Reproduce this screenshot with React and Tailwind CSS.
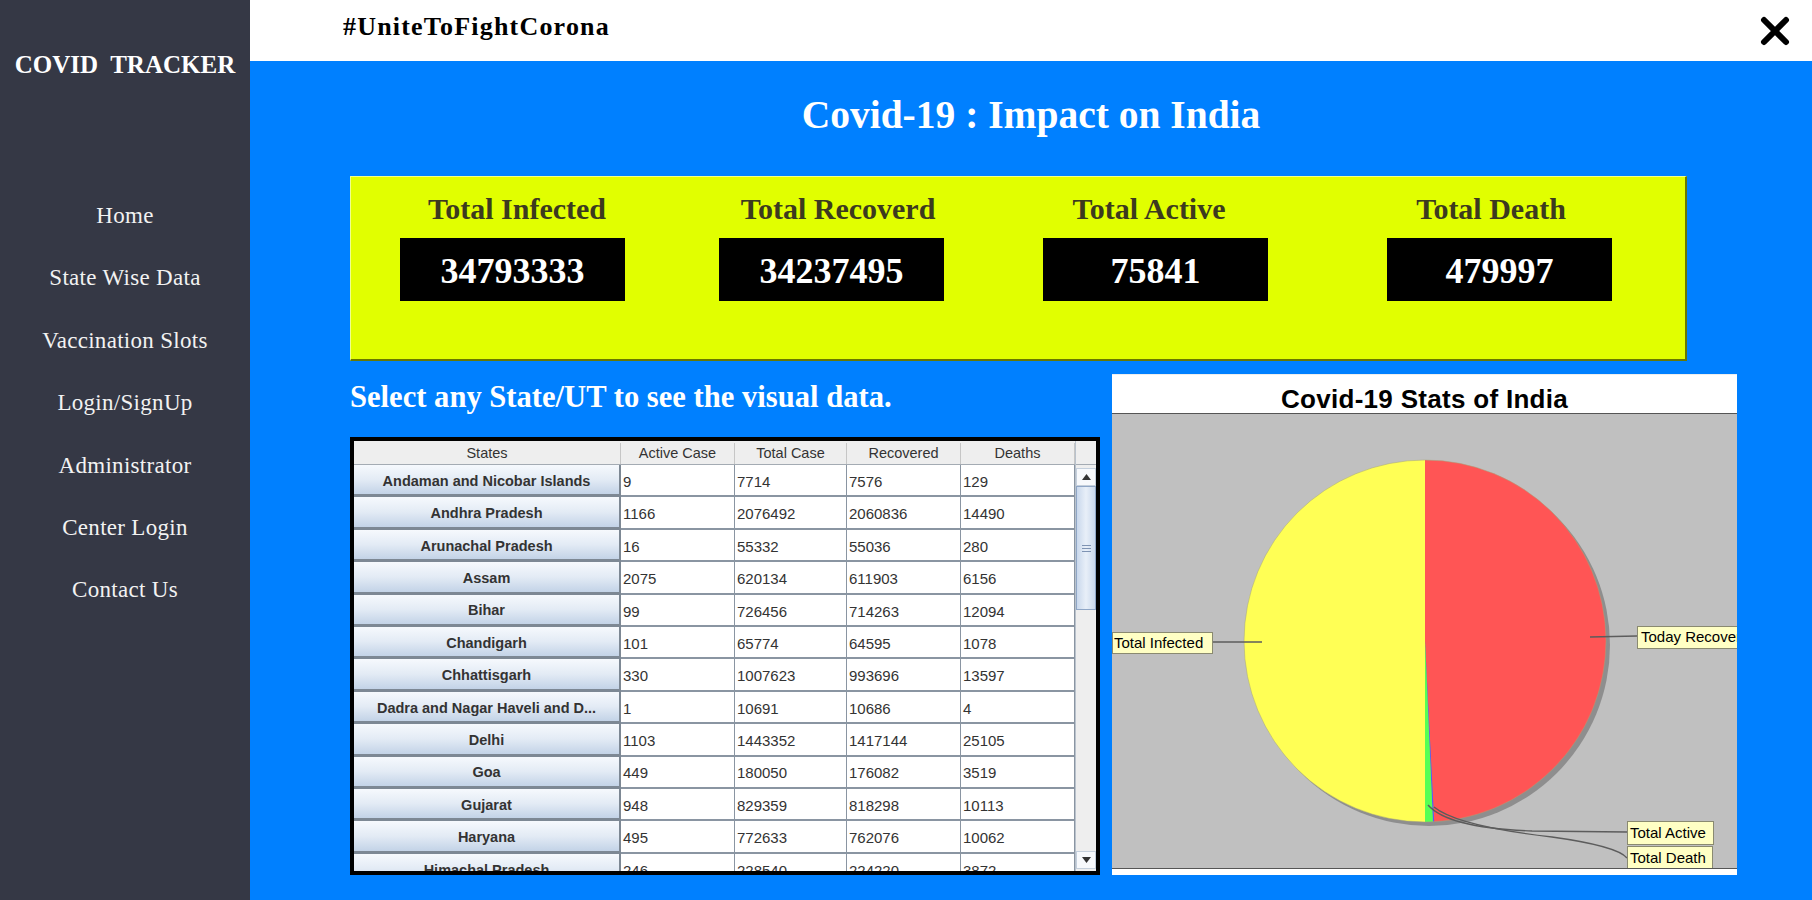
import React from 'react';

const navItems = [
  'Home',
  'State Wise Data',
  'Vaccination Slots',
  'Login/SignUp',
  'Administrator',
  'Center Login',
  'Contact Us',
];

const stats = [
  { label: 'Total Infected', value: '34793333', col: '', lab: 'pl-[9px]' },
  { label: 'Total Recoverd', value: '34237495', col: 'ml-[94px]', lab: 'pl-[13px]' },
  { label: 'Total Active', value: '75841', col: 'ml-[99px]', lab: 'pr-[13px]' },
  { label: 'Total Death', value: '479997', col: 'ml-[119px]', lab: 'pr-[17px]' },
];

const rows = [
  ['Andaman and Nicobar Islands', '9', '7714', '7576', '129'],
  ['Andhra Pradesh', '1166', '2076492', '2060836', '14490'],
  ['Arunachal Pradesh', '16', '55332', '55036', '280'],
  ['Assam', '2075', '620134', '611903', '6156'],
  ['Bihar', '99', '726456', '714263', '12094'],
  ['Chandigarh', '101', '65774', '64595', '1078'],
  ['Chhattisgarh', '330', '1007623', '993696', '13597'],
  ['Dadra and Nagar Haveli and D...', '1', '10691', '10686', '4'],
  ['Delhi', '1103', '1443352', '1417144', '25105'],
  ['Goa', '449', '180050', '176082', '3519'],
  ['Gujarat', '948', '829359', '818298', '10113'],
  ['Haryana', '495', '772633', '762076', '10062'],
  ['Himachal Pradesh', '246', '228540', '224220', '3872'],
];

// widths of the numeric columns
const colW = ['w-[114px]', 'w-[112px]', 'w-[114px]', 'flex-1'];

function StatsTable() {
  return (
    <div className="flex h-[438px] w-[750px] border-4 border-black bg-white font-['Liberation_Sans',Arial,sans-serif] text-[#333]">
      <div className="flex w-[721px] flex-col overflow-hidden">
        {/* header */}
        <div className="flex h-[24px] shrink-0 border-b border-[#a4abb3] bg-[#eeeeee] pt-[2px] text-[14.5px]">
          <div className="flex w-[267px] items-center justify-center border-r border-[#c6c6c6]">States</div>
          {['Active Case', 'Total Case', 'Recovered', 'Deaths'].map((h, i) => (
            <div key={h} className={`${colW[i]} flex items-center justify-center border-r border-[#c6c6c6]`}>
              {h}
            </div>
          ))}
        </div>
        {rows.map((r) => (
          <div key={r[0]} className="flex h-[32.4px] shrink-0">
            <div className="flex w-[267px] items-center justify-center border-r-2 border-b-[3px] border-[#7d8894] bg-gradient-to-b from-[#f6f9fd] via-[#e3ebf5] to-[#c3d3e7] pt-[4px] text-[14.5px] font-bold whitespace-nowrap">
              {r[0]}
            </div>
            {r.slice(1).map((v, i) => (
              <div key={i} className={`${colW[i]} flex items-center border-r border-b-2 border-[#8a95a2] pt-[4px] pl-[2px] text-[15px]`}>
                {v}
              </div>
            ))}
          </div>
        ))}
      </div>

      {/* scrollbar */}
      <div className="flex w-[21px] flex-col border-l border-[#b9c2cc] bg-[#eeeeee]">
        <div className="h-[24px] shrink-0 border-b border-[#a4abb3]" />
        <div className="mt-[3px] flex h-[18px] shrink-0 items-center justify-center border border-[#c4cfdc] bg-[#f7f9fc]">
          <svg width="9" height="6" viewBox="0 0 9 6"><path d="M0 6 4.5 0 9 6Z" fill="#333" /></svg>
        </div>
        <div className="flex h-[124px] shrink-0 items-center justify-center border border-[#8fa6c6] bg-gradient-to-r from-[#c9d8ec] via-[#e8eff8] to-[#c9d8ec]">
          <div className="flex w-[9px] flex-col gap-[2px]">
            <div className="h-[1px] bg-[#7e93b3]" />
            <div className="h-[1px] bg-[#7e93b3]" />
            <div className="h-[1px] bg-[#7e93b3]" />
          </div>
        </div>
        <div className="flex-1" />
        <div className="mb-[2px] flex h-[18px] shrink-0 items-center justify-center border border-[#c4cfdc] bg-[#f7f9fc]">
          <svg width="9" height="6" viewBox="0 0 9 6"><path d="M0 0 4.5 6 9 0Z" fill="#333" /></svg>
        </div>
      </div>
    </div>
  );
}

const tagCls =
  "absolute flex items-center border border-[#8a8a70] bg-[#ffffc4] font-['Liberation_Sans',Arial,sans-serif] text-[15px] whitespace-nowrap text-black";

function PieChart() {
  return (
    <div className="flex h-[501px] w-[625px] flex-col border-t border-[#eeeeee] bg-white">
      <div className="h-[39px] shrink-0 border-b border-[#555] pt-[9px] text-center font-['Liberation_Sans',Arial,sans-serif] text-[26px] leading-[30px] font-bold tracking-[0.3px] text-black">
        Covid-19 Stats of India
      </div>
      <div className="relative h-[455px] shrink-0 overflow-hidden border-b border-[#555] bg-[#c0c0c0]">
        <svg width="625" height="455" viewBox="0 0 625 455" className="block">
          <circle cx="317" cy="231" r="181" fill="#8e8e8e" />
          <path d="M313 227 L313 46 A181 181 0 0 1 322.16 407.77 Z" fill="#ff5555" />
          <path d="M313 227 L322.16 407.77 A181 181 0 0 1 320.9 407.83 Z" fill="#5555ff" />
          <path d="M313 227 L320.9 407.83 A181 181 0 0 1 313 408 Z" fill="#55ff55" />
          <path d="M313 227 L313 408 A181 181 0 0 1 313 46 Z" fill="#ffff55" />
          <circle cx="313" cy="227" r="181" fill="none" stroke="#a5a57a" strokeWidth="0.5" />
          <g fill="none" stroke="#5c5c5c" strokeWidth="1.4">
            <path d="M101 228 L150 228" />
            <path d="M478 223 L525 222" />
            <path d="M316 391 Q 336 414 420 417 L515 418" />
            <path d="M322 393 Q 345 412 440 423 Q 505 432 515 444" />
          </g>
        </svg>
        <div className={`${tagCls} top-[218px] left-0 h-[22px] w-[101px] pl-[1px]`}>Total Infected</div>
        <div className={`${tagCls} top-[212px] left-[525px] h-[23px] w-[120px] pl-[3px]`}>Today Recovered</div>
        <div className={`${tagCls} top-[407px] left-[515px] h-[24px] w-[87px] pl-[2px]`}>Total Active</div>
        <div className={`${tagCls} top-[432px] left-[515px] h-[24px] w-[86px] pl-[2px]`}>Total Death</div>
      </div>
    </div>
  );
}

export default function App() {
  return (
    <div className="flex h-[900px] w-[1812px] overflow-hidden font-['Liberation_Serif','Times_New_Roman',serif]">
      {/* Sidebar */}
      <aside className="flex w-[250px] shrink-0 flex-col bg-[#353845] text-white">
        <div className="pt-[51px] text-center text-[25px] leading-[28px] font-bold whitespace-pre">COVID  TRACKER</div>
        <nav className="mt-[106px] flex flex-col">
          {navItems.map((item) => (
            <div key={item} className="h-[62.4px] text-center text-[23px] leading-[62.4px] tracking-[0.3px] text-[#f2f2f2]">
              {item}
            </div>
          ))}
        </nav>
      </aside>

      {/* Main */}
      <main className="flex flex-1 flex-col">
        <header className="flex h-[61px] shrink-0 items-start justify-between bg-white">
          <div className="pt-[12px] pl-[93px] text-[26px] leading-[30px] font-bold tracking-[1.2px] text-black">
            #UniteToFightCorona
          </div>
          <button className="mt-[16px] mr-[22px]">
            <svg width="30" height="30" viewBox="0 0 30 30">
              <path d="M4 4 26 26 M26 4 4 26" stroke="#000" strokeWidth="6" strokeLinecap="round" />
            </svg>
          </button>
        </header>

        <section className="flex flex-1 flex-col bg-[#0080ff]">
          <h1 className="pt-[31px] text-center text-[39.5px] leading-[46px] font-bold text-white">
            Covid-19 : Impact on India
          </h1>

          {/* Summary panel */}
          <div className="mt-[38px] ml-[100px] flex h-[185px] w-[1337px] border-t border-l border-r-2 border-b-2 border-t-[#efff8c] border-l-[#efff8c] border-r-[#687800] border-b-[#687800] bg-[#e1ff00] pt-[15px] pl-[49px]">
            {stats.map((s) => (
              <div key={s.label} className={`${s.col} flex w-[225px] flex-col items-center`}>
                <div className={`${s.lab} w-full text-center text-[30px] leading-[34px] font-bold whitespace-nowrap text-[#3c3a1f]`}>
                  {s.label}
                </div>
                <div className="mt-[12px] flex h-[63px] w-[225px] items-center justify-center bg-black pt-[3px] text-[36px] font-bold text-white">
                  {s.value}
                </div>
              </div>
            ))}
          </div>

          {/* Table + chart */}
          <div className="mt-[13px] ml-[100px] flex gap-[12px]">
            <div className="flex w-[750px] flex-col">
              <div className="pt-[6px] text-[30.6px] leading-[34px] font-bold whitespace-nowrap text-white">
                Select any State/UT to see the visual data.
              </div>
              <div className="mt-[23px]">
                <StatsTable />
              </div>
            </div>
            <PieChart />
          </div>
        </section>
      </main>
    </div>
  );
}
